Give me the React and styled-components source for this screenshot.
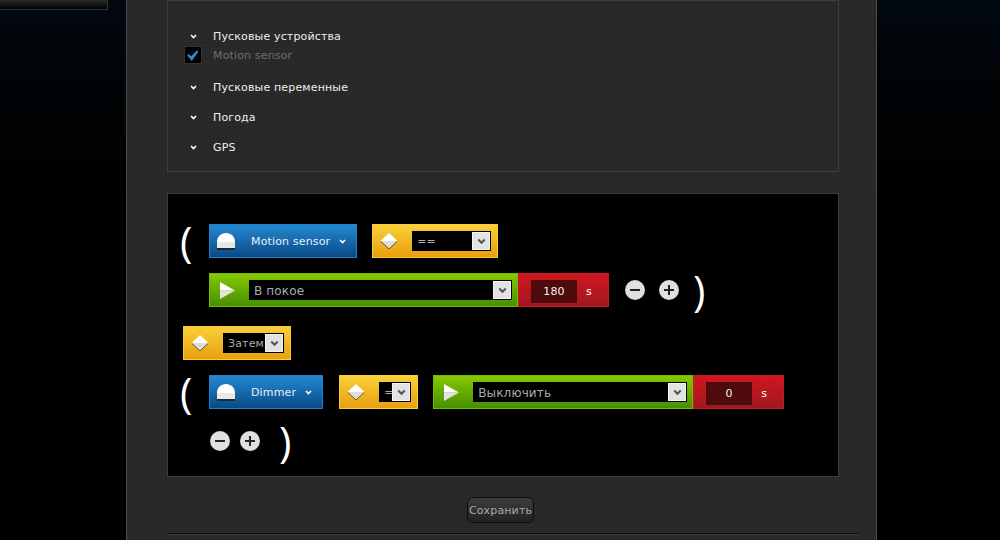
import React from "react";
import styled, { createGlobalStyle } from "styled-components";

const GlobalStyle = createGlobalStyle`
  html, body {
    margin: 0;
    height: 540px;
    overflow: hidden;
    background: #000;
  }
  body {
    font-family: "DejaVu Sans", Verdana, sans-serif;
    font-size: 11px;
    letter-spacing: 0.15px;
  }
`;

const Page = styled.div`
  display: flex;
  height: 540px;
  background: linear-gradient(#010810, #010406 90px, #000 190px);
`;

const LeftSide = styled.div`
  width: 126px;
  flex: none;
`;

const HeaderStub = styled.div`
  width: 107px;
  height: 9px;
  background: linear-gradient(#2a2a2a, #000);
  border-right: 1px solid #333;
  border-bottom: 1px solid #333;
`;

const Panel = styled.main`
  width: 751px;
  flex: none;
  box-sizing: border-box;
  padding: 0 37px 0 40px;
  background:
    radial-gradient(circle at 1px 1px, #2b2b2b 1px, transparent 1px) 0 0 / 4px 4px,
    #282828;
  border-left: 1px solid #4a4a4a;
  border-right: 1px solid #4a4a4a;
`;

const TriggerBox = styled.section`
  box-sizing: border-box;
  height: 172px;
  padding: 25px 16px 0;
  display: flex;
  flex-direction: column;
  gap: 10px;
  border: 1px solid #3c3c3c;
`;

const Group = styled.div`
  display: flex;
  flex-direction: column;
`;

const GroupRow = styled.div`
  display: flex;
  align-items: center;
  gap: 11px;
  height: ${(p) => (p.$sub ? "18px" : "20px")};
  margin-bottom: ${(p) => (p.$sub ? "3px" : "0")};
`;

const IconCell = styled.span`
  width: 18px;
  flex: none;
  display: flex;
  justify-content: center;
`;

const GroupLabel = styled.span`
  color: ${(p) => (p.$muted ? "#6e6e6e" : "#eeeeee")};
`;

const CheckBox = styled.span`
  box-sizing: border-box;
  width: 18px;
  height: 18px;
  display: flex;
  align-items: center;
  justify-content: center;
  background: #000;
  border: 1px solid #333;
`;

const Canvas = styled.section`
  box-sizing: border-box;
  height: 284px;
  margin-top: 21px;
  padding: 30px 15px 0;
  display: flex;
  flex-direction: column;
  gap: 15px;
  background: #000;
  border: 1px solid #3c3c3c;
`;

const Row = styled.div`
  display: flex;
  align-items: center;
  height: 34px;
  padding-left: ${(p) => p.$indent || 0}px;
  margin-bottom: ${(p) => p.$after || 0}px;
`;

const Paren = styled.span`
  width: ${(p) => (p.$open ? 29 : 26)}px;
  margin-left: ${(p) => (p.$open ? -3 : -1)}px;
  flex: none;
  font-family: "Open Sans", sans-serif;
  font-size: 42px;
  font-weight: 400;
  line-height: 40px;
  color: #fff;
`;

const Tile = styled.div`
  box-sizing: border-box;
  height: 34px;
  flex: none;
  display: flex;
  align-items: center;
`;

const DeviceTile = styled(Tile)`
  padding: 0 10px 0 7px;
  margin-right: ${(p) => p.$after || 0}px;
  background: linear-gradient(#2389cf, #0a4a88);
  border: 1px solid #1f7fcf;
  color: #e6f0fa;
`;

const DeviceName = styled.span`
  margin: 0 9px 0 16px;
`;

const OperatorTile = styled(Tile)`
  padding: 0 6px 0 7px;
  margin-right: ${(p) => p.$after || 0}px;
  background: linear-gradient(#f8d038, #e8a010);
  border: 1px solid #f8cc3c;
`;

const ActionTile = styled(Tile)`
  padding: 0 5px 0 10px;
  background: linear-gradient(#86c800, #459000);
  border: 1px solid #78b808;
`;

const DelayTile = styled(Tile)`
  width: 91px;
  padding: 3px 0 0 12px;
  margin-right: 16px;
  background: linear-gradient(#d0161f, #a01820);
  border: 1px solid #c41a22;
  color: #fff;
`;

const DelayValue = styled.span`
  width: 46px;
  height: 23px;
  display: flex;
  align-items: center;
  justify-content: center;
  background: #4f0a0c;
  color: #f2f2f2;
`;

const DelayUnit = styled.span`
  margin-left: 9px;
`;

const IconSlot = styled.span`
  width: 18px;
  flex: none;
  display: flex;
  justify-content: center;
`;

const Select = styled.div`
  box-sizing: border-box;
  width: ${(p) => p.$width}px;
  height: 20px;
  margin-left: ${(p) => p.$gap}px;
  padding: 1px;
  display: flex;
  align-items: center;
  justify-content: space-between;
  background: #000;
  color: #a8adb2;
  font-size: ${(p) => p.$size || 12}px;
  overflow: hidden;
`;

const SelectText = styled.span`
  flex: 1;
  min-width: 0;
  padding: 1px 0 0 4px;
  white-space: nowrap;
  overflow: hidden;
`;

const SelectArrow = styled.span`
  box-sizing: border-box;
  width: 18px;
  height: 18px;
  flex: none;
  display: flex;
  align-items: center;
  justify-content: center;
  background: #e2e2e2;
  border: 1px solid #f4f4f4;
`;

const RoundButton = styled.button`
  width: 20px;
  height: 20px;
  flex: none;
  padding: 0;
  margin-right: ${(p) => p.$after || 0}px;
  display: flex;
  align-items: center;
  justify-content: center;
  border: none;
  border-radius: 50%;
  background: radial-gradient(circle, #e0e0e0 62%, #a8a8a8 100%);
`;

const SaveRow = styled.div`
  display: flex;
  justify-content: center;
  padding: 20px 5px 10px 0;
`;

const SaveButton = styled.button`
  box-sizing: border-box;
  width: 67px;
  height: 26px;
  padding: 0;
  font: inherit;
  letter-spacing: inherit;
  color: #a8a8a8;
  background: linear-gradient(#3c3c3c, #222);
  border: 1px solid #0c0c0c;
  border-radius: 6px;
`;

const Divider = styled.hr`
  height: 1px;
  margin: 0 -20px 0 0;
  border: none;
  background: #0c0c0c;
  border-bottom: 1px solid #3a3a3a;
`;

const Chevron = ({ color = "#fff", size = 7 }) => (
  <svg width={size} height={size - 2} viewBox="0 0 7 5" fill="none">
    <path d="M1 1l2.5 2.5L6 1" stroke={color} strokeWidth="1.6" />
  </svg>
);

const Tick = () => (
  <svg width="12" height="11" viewBox="0 0 15 14">
    <path d="M0 7l2-2 3 3 8-8 1 3-8 11z" fill="#2a88d8" />
  </svg>
);

const Dome = () => (
  <svg width="18" height="17" viewBox="0 0 18 17">
    <path d="M0 16V9C0 3.5 4 0 9 0s9 3.5 9 9v7z" fill="#fff" />
    <path d="M0 9h18v7H0z" fill="#e8e8e8" />
    <path d="M0 15h18v2H0z" fill="#1a2a3a" />
  </svg>
);

const Diamond = () => (
  <svg width="18" height="16" viewBox="0 0 18 16">
    <path d="M9 0l8.5 8H.5z" fill="#fff" />
    <path d="M.5 8h17L9 16z" fill="#ddd" />
    <path d="M1 8.5L9 16l8-7.5" fill="none" stroke="#6b5520" />
  </svg>
);

const Play = () => (
  <svg width="15" height="17" viewBox="0 0 15 17">
    <path d="M0 0l15 8.5H0z" fill="#fff" />
    <path d="M0 8.5h15L0 17z" fill="#e4e4e4" />
  </svg>
);

const Minus = () => (
  <svg width="12" height="12" viewBox="0 0 12 12">
    <path d="M1 6h10" stroke="#222" strokeWidth="2" />
  </svg>
);

const Plus = () => (
  <svg width="12" height="12" viewBox="0 0 12 12">
    <path d="M1 6h10M6 1v10" stroke="#222" strokeWidth="2" />
  </svg>
);

const groups = ["Пусковые переменные", "Погода", "GPS"];

const Device = ({ name, after }) => (
  <DeviceTile $after={after}>
    <IconSlot>
      <Dome />
    </IconSlot>
    <DeviceName>{name}</DeviceName>
    <Chevron />
  </DeviceTile>
);

const Dropdown = ({ value, width, gap, size }) => (
  <Select $width={width} $gap={gap} $size={size}>
    <SelectText>{value}</SelectText>
    <SelectArrow>
      <Chevron color="#555" size={9} />
    </SelectArrow>
  </Select>
);

const Operator = ({ value, width, after, size }) => (
  <OperatorTile $after={after}>
    <IconSlot>
      <Diamond />
    </IconSlot>
    <Dropdown value={value} width={width} gap={14} size={size} />
  </OperatorTile>
);

const Action = ({ value, width }) => (
  <ActionTile>
    <Play />
    <Dropdown value={value} width={width} gap={14} />
  </ActionTile>
);

const Delay = ({ value }) => (
  <DelayTile>
    <DelayValue>{value}</DelayValue>
    <DelayUnit>s</DelayUnit>
  </DelayTile>
);

const App = () => (
  <>
    <GlobalStyle />
    <Page>
      <LeftSide>
        <HeaderStub />
      </LeftSide>
      <Panel>
        <TriggerBox>
          <Group>
            <GroupRow>
              <IconCell>
                <Chevron />
              </IconCell>
              <GroupLabel>Пусковые устройства</GroupLabel>
            </GroupRow>
            <GroupRow $sub>
              <CheckBox>
                <Tick />
              </CheckBox>
              <GroupLabel $muted>Motion sensor</GroupLabel>
            </GroupRow>
          </Group>
          {groups.map((name) => (
            <GroupRow key={name}>
              <IconCell>
                <Chevron />
              </IconCell>
              <GroupLabel>{name}</GroupLabel>
            </GroupRow>
          ))}
        </TriggerBox>

        <Canvas>
          <Row>
            <Paren $open>(</Paren>
            <Device name="Motion sensor" after={15} />
            <Operator value="==" width={79} size={11} />
          </Row>
          <Row $indent={26} $after={4}>
            <Action value="В покое" width={263} />
            <Delay value="180" />
            <RoundButton $after={14}>
              <Minus />
            </RoundButton>
            <RoundButton $after={15}>
              <Plus />
            </RoundButton>
            <Paren>)</Paren>
          </Row>
          <Row>
            <Operator value="Затем" width={61} size={11} />
          </Row>
          <Row>
            <Paren $open>(</Paren>
            <Device name="Dimmer" after={16} />
            <Operator value="=" width={32} size={11} after={15} />
            <Action value="Выключить" width={214} />
            <Delay value="0" />
          </Row>
          <Row $indent={27}>
            <RoundButton $after={10}>
              <Minus />
            </RoundButton>
            <RoundButton $after={20}>
              <Plus />
            </RoundButton>
            <Paren>)</Paren>
          </Row>
        </Canvas>

        <SaveRow>
          <SaveButton>Сохранить</SaveButton>
        </SaveRow>
        <Divider />
      </Panel>
    </Page>
  </>
);

export default App;
